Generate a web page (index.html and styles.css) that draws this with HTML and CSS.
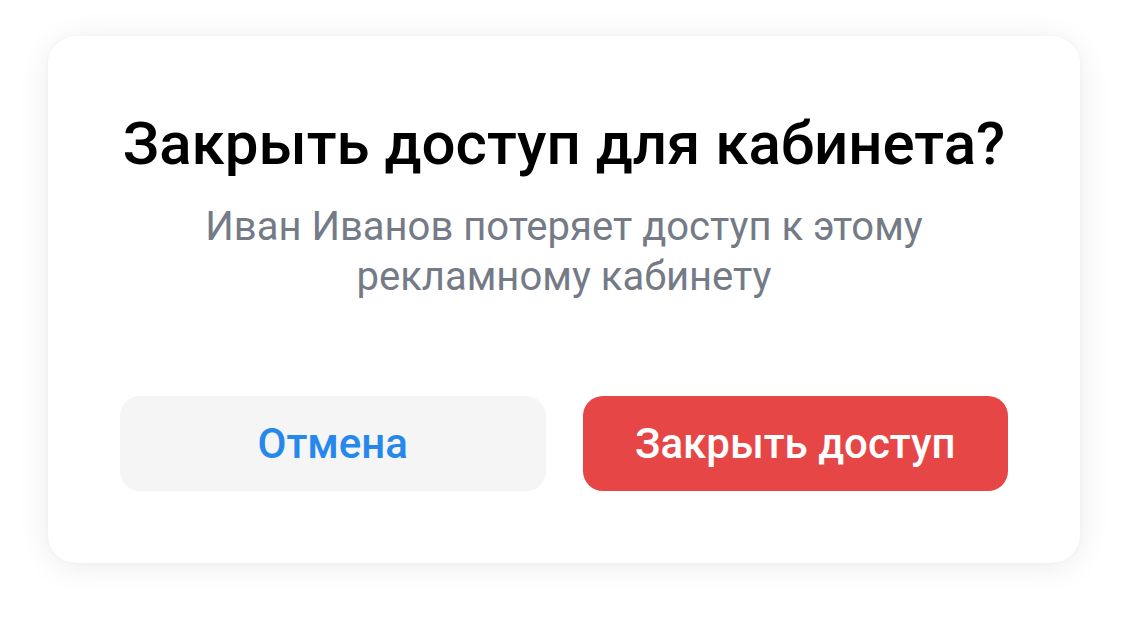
FILE: index.html
```html
<!DOCTYPE html>
<html lang="ru">
<head>
    <meta charset="UTF-8">
    <meta name="viewport" content="width=device-width, initial-scale=1.0">
    <title>Закрыть доступ</title>
    <link rel="stylesheet" href="styles.css">
</head>
<body>
    <div class="alert">
        <h1 class="alert-title">Закрыть доступ для кабинета?</h1>
        <p class="alert-text">Иван Иванов потеряет доступ к этому<br>рекламному кабинету</p>
        <div class="alert-actions">
            <button class="btn btn-secondary">Отмена</button>
            <button class="btn btn-danger">Закрыть доступ</button>
        </div>
    </div>
</body>
</html>
```

FILE: styles.css
```css
* {
    margin: 0;
    padding: 0;
    box-sizing: border-box;
}

body {
    font-family: Roboto, "Noto Sans", sans-serif;
    background: #fff;
    padding: 36px 48px;
}

.alert {
    width: 1032px;
    height: 527px;
    background: #fff;
    border-radius: 28px;
    box-shadow: 0 4px 32px rgba(0, 0, 0, 0.08), 0 0 4px rgba(0, 0, 0, 0.03);
    padding: 72px 72px 72px;
    display: flex;
    flex-direction: column;
    align-items: center;
    text-align: center;
}

.alert-title {
    font-size: 60px;
    line-height: 72px;
    font-weight: 500;
    color: #000;
}

.alert-text {
    margin-top: 22px;
    font-size: 40px;
    line-height: 50px;
    color: #747b86;
}

.alert-actions {
    margin-top: auto;
    width: 100%;
    display: flex;
    gap: 37px;
}

.btn {
    flex: 1;
    height: 95px;
    border: none;
    border-radius: 20px;
    font-family: inherit;
    font-size: 42px;
    font-weight: 500;
    cursor: pointer;
}

.btn-secondary {
    background: #f5f5f5;
    color: #2688eb;
}

.btn-danger {
    background: #e64646;
    color: #fff;
}
```
